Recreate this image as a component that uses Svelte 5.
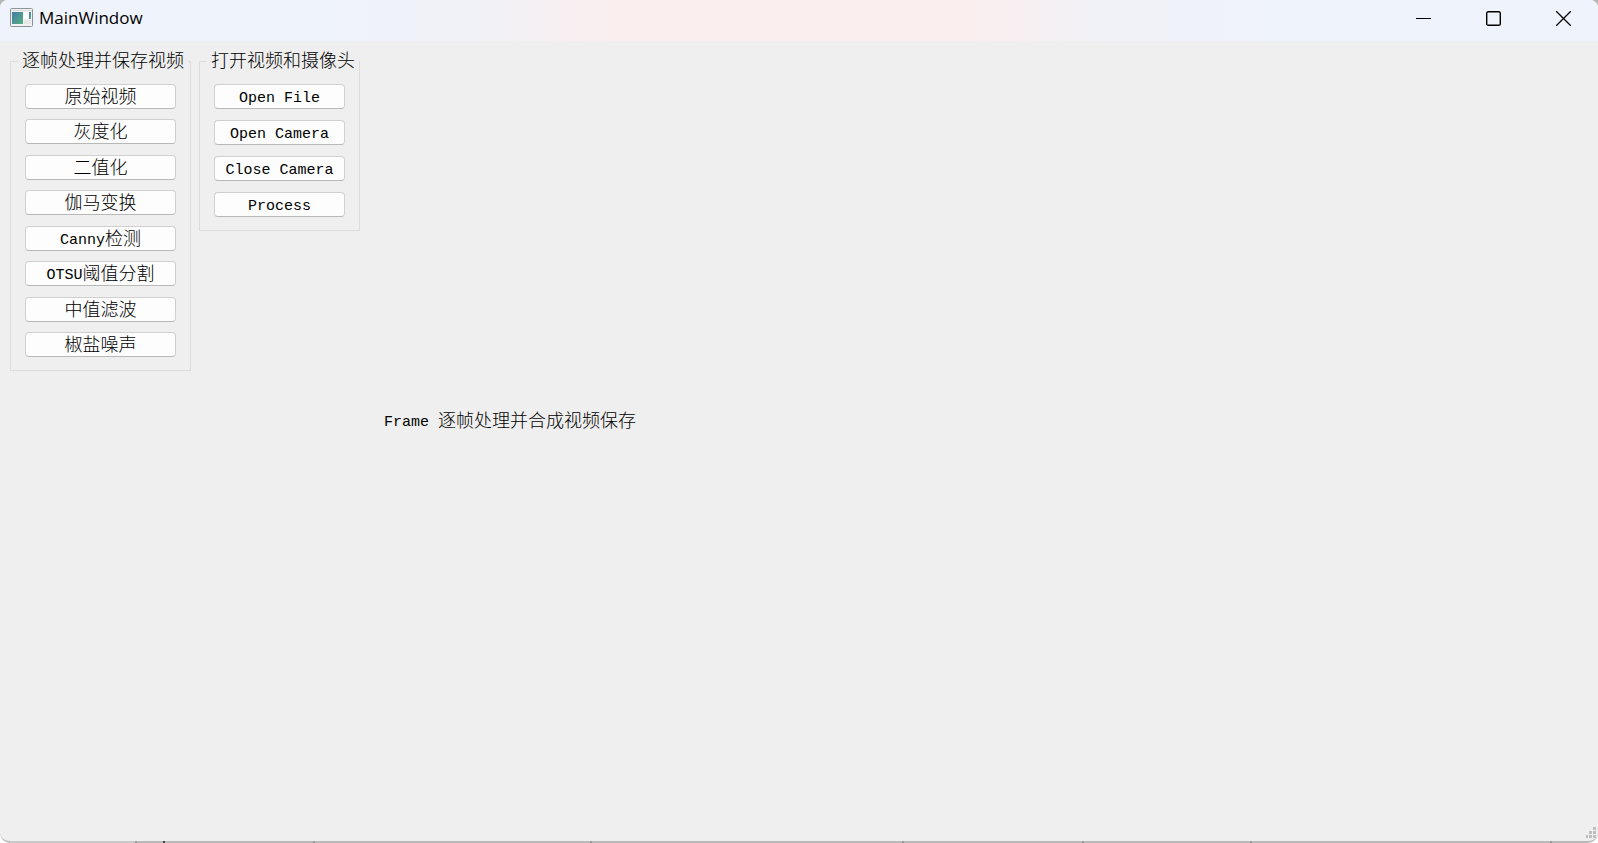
<script>
    let status = 'Frame 逐帧处理并合成视频保存';

    const groups = [
        {
            title: '逐帧处理并保存视频',
            kind: 'filters',
            actions: ['原始视频', '灰度化', '二值化', '伽马变换', 'Canny检测', 'OTSU阈值分割', '中值滤波', '椒盐噪声'],
        },
        {
            title: '打开视频和摄像头',
            kind: 'sources',
            actions: ['Open File', 'Open Camera', 'Close Camera', 'Process'],
        },
    ];

    // dividers of the taskbar that shows under the window
    const ticks = [135, 313, 590, 902, 1082, 1250, 1550];

    // latin and chinese runs are set in different sizes
    const runs = (text) => text.match(/[\x20-\x7e]+|[^\x20-\x7e]+/g);
    const isLatin = (run) => /^[\x20-\x7e]/.test(run);
</script>

<style>
    :global(body) {
        background: #fff;
    }

    .desktop {
        position: relative;
        min-height: 100vh;
        display: flex;
        background: linear-gradient(#b5b5b5 50%, #fff 50%);
    }

    .window {
        flex: 1;
        box-sizing: border-box;
        display: flex;
        flex-direction: column;
        background: #efefef;
        border-bottom: 2px solid #bababa;
        border-radius: 8px 8px 10px 10px;
        overflow: hidden;
        color: #000;
    }

    header {
        height: 41px;
        display: flex;
        align-items: center;
        background: linear-gradient(90deg, #eff3fb 20%, #f1f2f7 30%, #fbeeee 39%, #fbeeee 60%, #f1f2f7 69%, #eff3fb 80%);
    }

    .logo {
        margin: 0 6px 6px 10px;
    }

    h1 {
        flex: 1;
        margin: 0 0 6px;
        font: 400 17px/24px "Open Sans", "Noto Sans", sans-serif;
    }

    .control {
        width: 70px;
        height: 41px;
        padding: 0 0 4px;
        border: none;
        background: none;
        display: flex;
        align-items: center;
        justify-content: center;
    }

    .control:hover {
        background: #e3e7ef;
    }

    main {
        flex: 1;
        display: flex;
        align-items: flex-start;
        gap: 8px;
        padding: 8px 10px 0;
        font: 300 18px/24px "Noto Sans CJK SC", sans-serif;
    }

    .latin {
        font: 400 15px/20px "Liberation Mono", monospace;
        vertical-align: 1px;
        white-space: pre;
    }

    fieldset {
        margin: 0;
        padding: 11px 14px 13px;
        min-width: 0;
        box-sizing: border-box;
        border: 1px solid #dcdcdc;
    }

    legend {
        margin: 0 -14px 0 -7px;
        padding: 0 4px 4px;
        line-height: 20px;
        white-space: nowrap;
    }

    .actions {
        display: flex;
        flex-direction: column;
        justify-content: space-between;
    }

    .filters {
        width: 151px;
        height: 273px;
    }

    .sources {
        width: 131px;
        height: 133px;
    }

    .actions button {
        height: 25px;
        padding: 0 0 2px;
        border: 1px solid #d0d0d0;
        border-bottom-color: #b8b8b8;
        border-radius: 4px;
        background: #fdfdfd;
        color: #000;
        font: inherit;
        line-height: 21px;
        white-space: nowrap;
    }

    .actions button:active {
        background: #f0f0f0;
    }

    .status {
        align-self: center;
        margin: 0 0 0 16px;
    }

    footer {
        height: 50px;
        display: flex;
        justify-content: flex-end;
        align-items: flex-end;
    }

    .taskbar {
        position: absolute;
        left: 0;
        bottom: 0;
        width: 100%;
        height: 2px;
    }
</style>

{#snippet label(text)}
    {#each runs(text) as run}<span class:latin={isLatin(run)}>{run}</span>{/each}
{/snippet}

<div class="desktop">
    <div class="window">
        <header>
            <svg class="logo" width="23" height="19" viewBox="0 0 23 19">
                <defs>
                    <linearGradient id="screen" x1="0" y1="0" x2="1" y2="1">
                        <stop offset="0" stop-color="#4679a8" />
                        <stop offset="1" stop-color="#55b183" />
                    </linearGradient>
                </defs>
                <rect x="0.5" y="0.5" width="22" height="18" rx="1" fill="#f3f3f3" stroke="#8d9298" />
                <path d="M1 2.5h21" stroke="#d5d8dc" />
                <rect x="2" y="4" width="11" height="12" fill="url(#screen)" />
                <rect x="14" y="4" width="4" height="7" fill="#fff" />
                <rect x="14" y="12" width="7" height="4" fill="#e6e6e6" />
                <rect x="19" y="4" width="2" height="7" fill="url(#screen)" />
            </svg>
            <h1>MainWindow</h1>
            <button class="control" aria-label="Minimize">
                <svg width="15" height="15" viewBox="0 0 15 15"><path d="M0 7.5h15" stroke="#000" /></svg>
            </button>
            <button class="control" aria-label="Maximize">
                <svg width="15" height="15" viewBox="0 0 15 15">
                    <rect x="0.7" y="0.7" width="13.6" height="13.6" rx="1.6" fill="none" stroke="#000" stroke-width="1.4" />
                </svg>
            </button>
            <button class="control" aria-label="Close">
                <svg width="15" height="15" viewBox="0 0 15 15"><path d="M0 0l15 15M15 0L0 15" stroke="#000" stroke-width="1.3" /></svg>
            </button>
        </header>

        <main>
            {#each groups as group}
                <fieldset>
                    <legend>{group.title}</legend>
                    <div class="actions {group.kind}">
                        {#each group.actions as action}
                            <button>{@render label(action)}</button>
                        {/each}
                    </div>
                </fieldset>
            {/each}
            <p class="status">{@render label(status)}</p>
        </main>

        <footer>
            <svg width="14" height="14" viewBox="0 0 14 14" fill="#bfbfbf">
                <path d="M9 0h3v3H9zM5 4h3v3H5zM9 4h3v3H9zM2 8h2v3H2zM5 8h3v3H5zM9 8h3v3H9z" />
            </svg>
        </footer>
    </div>

    <svg class="taskbar" viewBox="0 0 1598 2" preserveAspectRatio="none">
        <rect x="10" width="125" height="2" fill="#c8c8c8" />
        {#each ticks as x}
            <rect {x} width="2" height="2" fill="#999" />
        {/each}
        <rect x="163" width="2" height="2" fill="#444" />
    </svg>
</div>
